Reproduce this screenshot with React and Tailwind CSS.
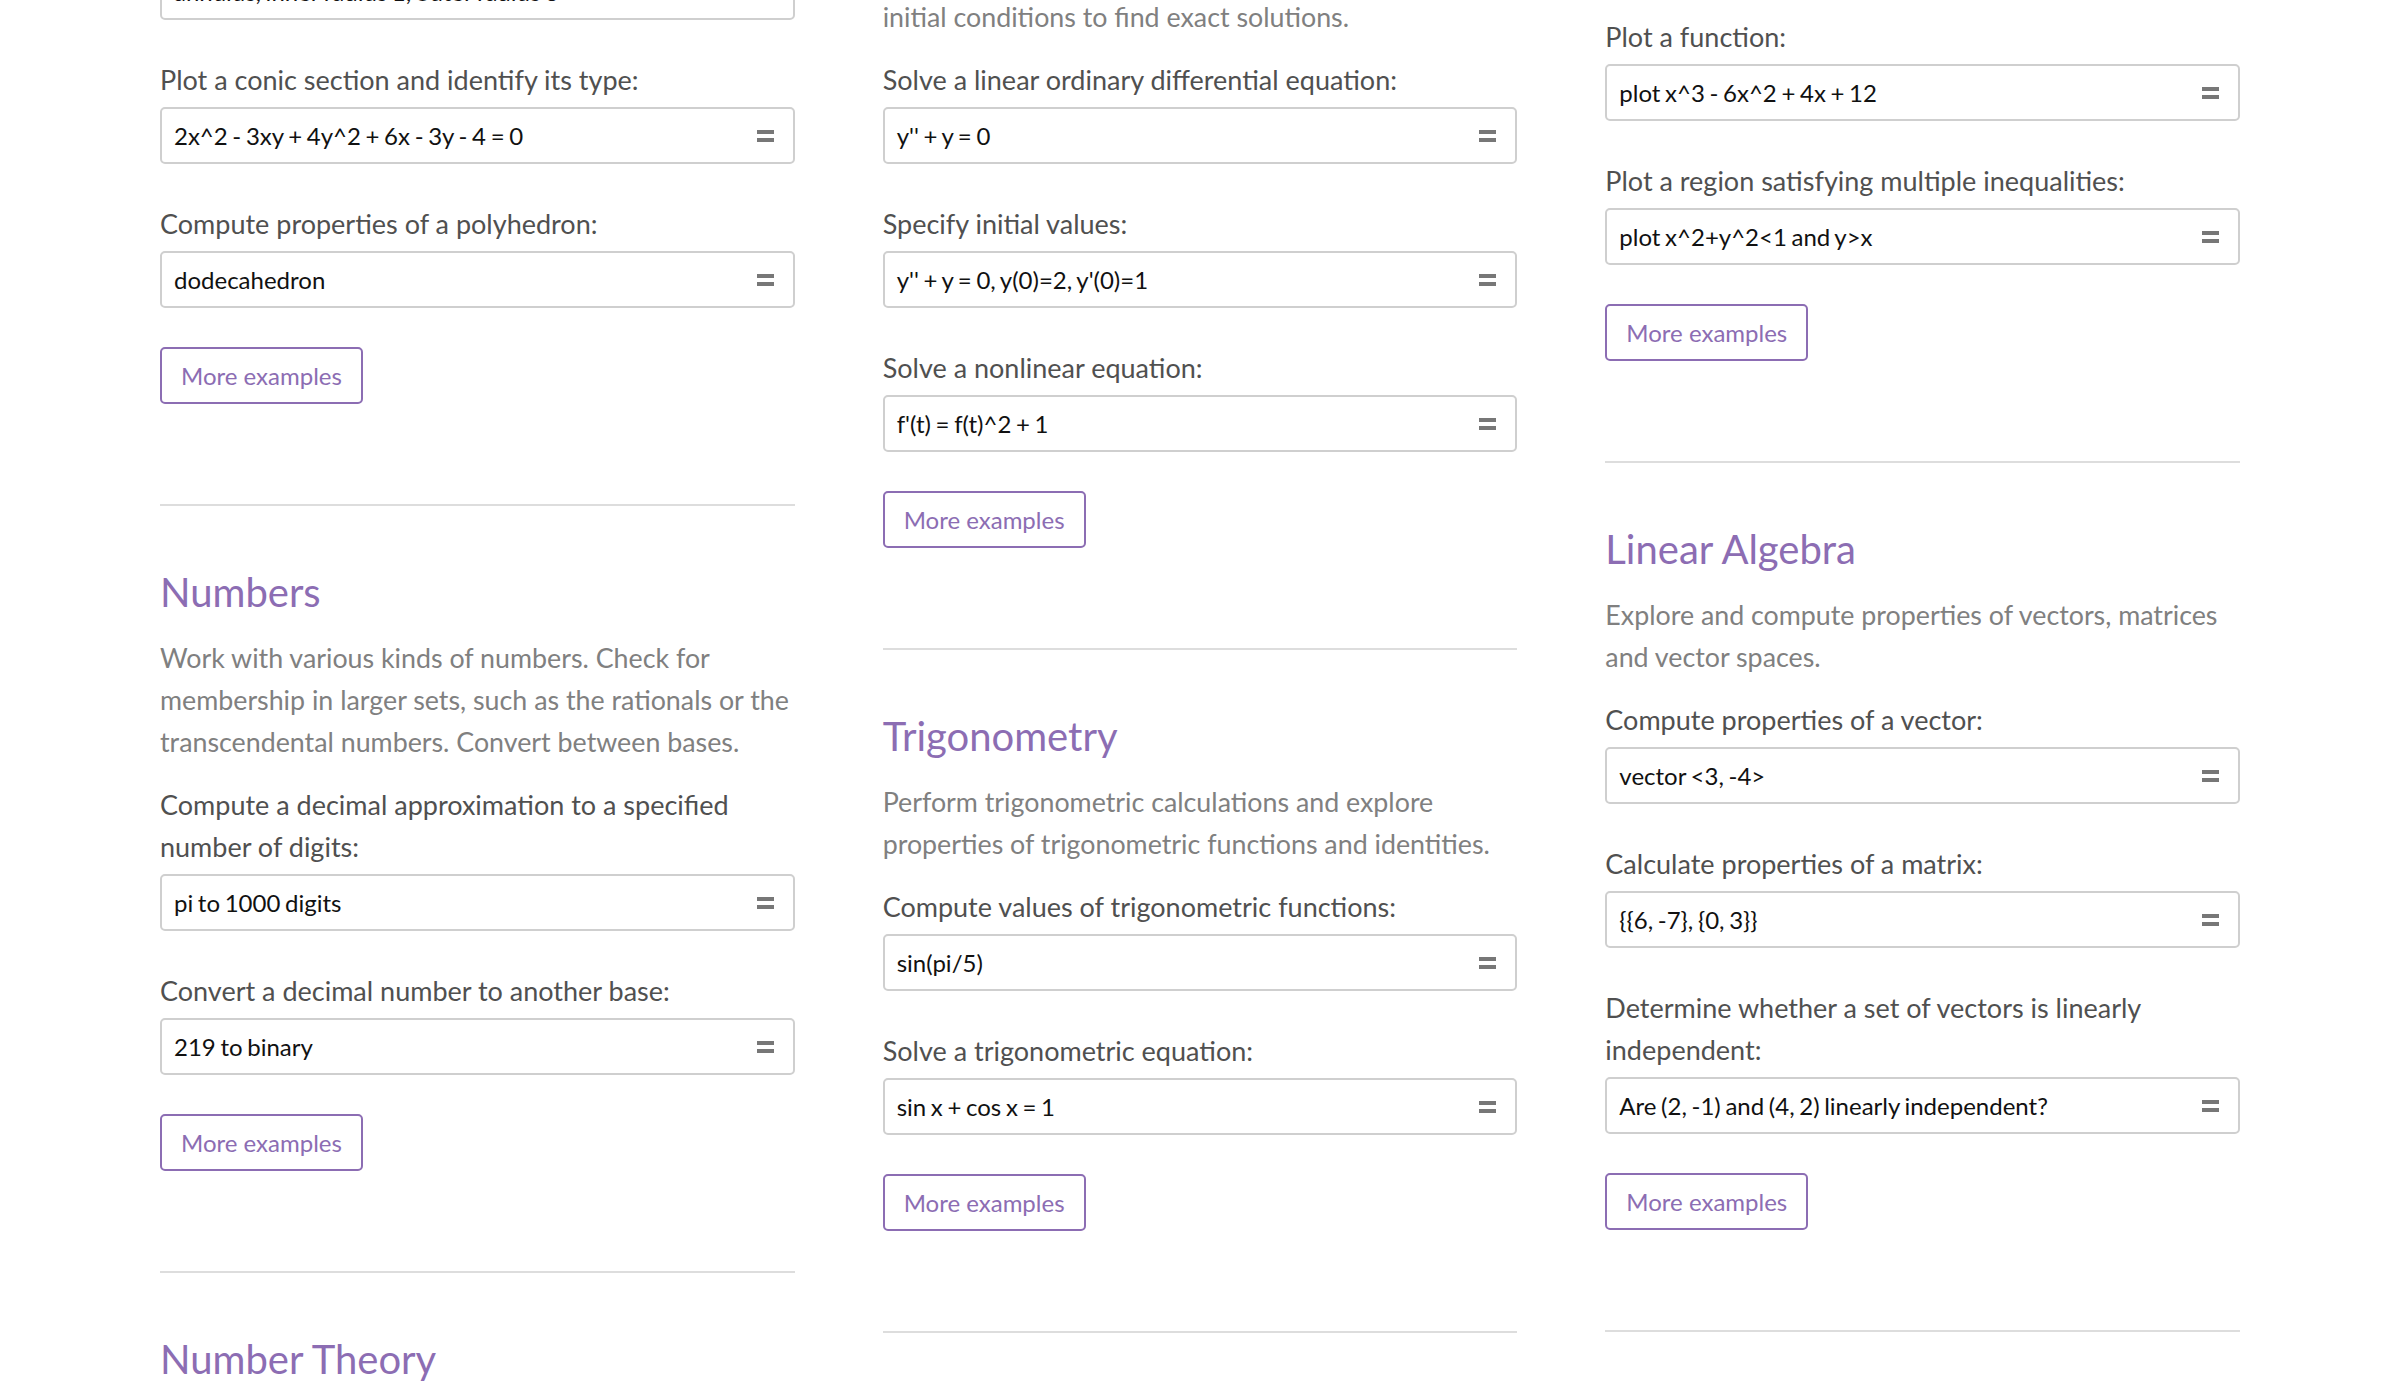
const Equals = () => (
    <span className="flex flex-col gap-[4px] shrink-0">
        <span className="block w-[17px] h-[4px] bg-[#777]" />
        <span className="block w-[17px] h-[4px] bg-[#777]" />
    </span>
);

const InputBox = ({ value, className = '' }) => (
    <div className={`h-[57px] border-2 border-[#cfcfcf] rounded-[5px] flex items-center justify-between pl-[12px] pr-[19px] bg-white ${className}`}>
        <span className="text-[24px] [word-spacing:-1.5px] text-[#111] whitespace-nowrap">{value}</span>
        <Equals />
    </div>
);

const Example = ({ label, value, first }) => (
    <div className={first ? 'mt-[21px]' : 'mt-[39px]'}>
        <p className="text-[27px] leading-[42px] text-[#505050] whitespace-nowrap">{label}</p>
        <InputBox value={value} className="mt-[6px]" />
    </div>
);

const MoreButton = () => (
    <button className="mt-[39px] self-start h-[57px] px-[19px] border-2 border-[#8c6db3] rounded-[5px] text-[24px] text-[#8c6db3] bg-white">
        More examples
    </button>
);

const Section = ({ title, lines, examples }) => (
    <div className="flex flex-col">
        <div className="mt-[100px] h-[2px] bg-[#dddddd]" />
        <h2 className="mt-[61px] text-[40px] leading-[50px] text-[#8c6db3]">{title}</h2>
        <p className="mt-[20px] text-[26.8px] leading-[42px] text-[#808080] whitespace-nowrap">
            {lines.map((line, i) => (
                <span key={i}>{line}{i < lines.length - 1 && <br />}</span>
            ))}
        </p>
        {examples.map((ex, i) => (
            <Example key={i} label={ex.label} value={ex.value} first={i === 0} />
        ))}
        {examples.length > 0 && <MoreButton />}
    </div>
);

export default function App() {
    return (
        <div className="min-h-screen bg-white overflow-hidden font-['Lato',sans-serif]">
            <div className="w-[2080px] mx-auto grid grid-cols-3 gap-x-[88px] items-start">
                {/* column 1 */}
                <div className="flex flex-col">
                    <InputBox value="annulus, inner radius 1, outer radius 3" className="mt-[-37px]" />
                    <Example label="Plot a conic section and identify its type:" value="2x^2 - 3xy + 4y^2 + 6x - 3y - 4 = 0" />
                    <Example label="Compute properties of a polyhedron:" value="dodecahedron" />
                    <MoreButton />
                    <Section
                        title="Numbers"
                        lines={[
                            'Work with various kinds of numbers. Check for',
                            'membership in larger sets, such as the rationals or the',
                            'transcendental numbers. Convert between bases.',
                        ]}
                        examples={[
                            { label: <>Compute a decimal approximation to a specified<br />number of digits:</>, value: 'pi to 1000 digits' },
                            { label: 'Convert a decimal number to another base:', value: '219 to binary' },
                        ]}
                    />
                    <Section
                        title="Number Theory"
                        lines={['Explore properties of integers, including primality,', 'divisibility and factorization.']}
                        examples={[]}
                    />
                </div>

                {/* column 2 */}
                <div className="flex flex-col">
                    <p className="mt-[-46px] text-[26.8px] leading-[42px] text-[#808080] whitespace-nowrap">
                        Solve differential equations of various kinds, or<br />
                        initial conditions to find exact solutions.
                    </p>
                    <Example first label="Solve a linear ordinary differential equation:" value="y'' + y = 0" />
                    <Example label="Specify initial values:" value="y'' + y = 0, y(0)=2, y'(0)=1" />
                    <Example label="Solve a nonlinear equation:" value="f'(t) = f(t)^2 + 1" />
                    <MoreButton />
                    <Section
                        title="Trigonometry"
                        lines={[
                            'Perform trigonometric calculations and explore',
                            'properties of trigonometric functions and identities.',
                        ]}
                        examples={[
                            { label: 'Compute values of trigonometric functions:', value: 'sin(pi/5)' },
                            { label: 'Solve a trigonometric equation:', value: 'sin x + cos x = 1' },
                        ]}
                    />
                    <div className="mt-[100px] h-[2px] bg-[#dddddd]" />
                </div>

                {/* column 3 */}
                <div className="flex flex-col">
                    <InputBox value="plot sin x" className="mt-[-80px]" />
                    <Example label="Plot a function:" value="plot x^3 - 6x^2 + 4x + 12" />
                    <Example label="Plot a region satisfying multiple inequalities:" value="plot x^2+y^2<1 and y>x" />
                    <MoreButton />
                    <Section
                        title="Linear Algebra"
                        lines={[
                            'Explore and compute properties of vectors, matrices',
                            'and vector spaces.',
                        ]}
                        examples={[
                            { label: 'Compute properties of a vector:', value: 'vector <3, -4>' },
                            { label: 'Calculate properties of a matrix:', value: '{{6, -7}, {0, 3}}' },
                            { label: <>Determine whether a set of vectors is linearly<br />independent:</>, value: 'Are (2, -1) and (4, 2) linearly independent?' },
                        ]}
                    />
                    <div className="mt-[100px] h-[2px] bg-[#dddddd]" />
                </div>
            </div>
        </div>
    );
}
